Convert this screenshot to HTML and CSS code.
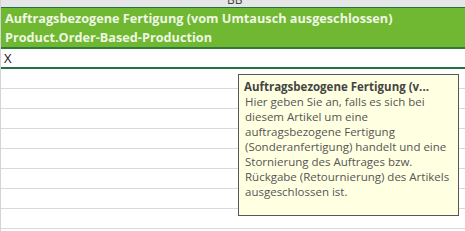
FILE: index.html
```html
<!DOCTYPE html>
<html lang="de">
<head>
    <meta charset="UTF-8">
    <title>Auftragsbezogene Fertigung</title>
    <link rel="stylesheet" href="styles.css">
</head>
<body>
<div class="sheet">
    <div class="col-header"><span class="col-name">BB</span></div>
    <div class="head-cell">
        <div class="head-line">Auftragsbezogene Fertigung (vom Umtausch ausgeschlossen)</div>
        <div class="head-line">Product.Order-Based-Production</div>
    </div>
    <div class="cell active">X</div>
    <div class="row"></div>
    <div class="row"></div>
    <div class="row"></div>
    <div class="row"></div>
    <div class="row"></div>
    <div class="row"></div>
    <div class="row"></div>
    <div class="row"></div>

    <div class="tooltip">
        <div class="tip-title">Auftragsbezogene Fertigung (v...</div>
        <div class="tip-text">Hier geben Sie an, falls es sich bei diesem Artikel um eine auftragsbezogene Fertigung (Sonderanfertigung) handelt und eine Stornierung des Auftrages bzw. Rückgabe (Retournierung) des Artikels ausgeschlossen ist.</div>
    </div>
</div>
</body>
</html>
```

FILE: styles.css
```css
body {
    margin: 0;
    background: #fff;
    font-family: 'Open Sans', sans-serif;
    overflow: hidden;
}
.sheet {
    position: relative;
    width: 465px;
    height: 231px;
    overflow: hidden;
    border-left: 1px solid #d4d4d4;
    box-sizing: border-box;
}
.col-header {
    height: 7px;
    background: #e6e6e6;
    border-bottom: 1px solid #217346;
    overflow: hidden;
    position: relative;
}
.col-name {
    position: absolute;
    left: 226px;
    top: -9px;
    font-size: 12px;
    color: #444;
}
.head-cell {
    background: #70b832;
    color: #eef7e3;
    font-weight: 700;
    font-size: 12.7px;
    padding: 1px 0 0 4px;
    height: 38px;
    border-bottom: 2px solid #2f7a3d;
}
.head-line {
    height: 19px;
    line-height: 19px;
    white-space: nowrap;
}
.cell {
    height: 18px;
    line-height: 18px;
    padding-left: 3px;
    font-size: 13px;
    color: #111;
}
.cell.active {
    border-bottom: 2px solid #217346;
}
.row {
    height: 19px;
    border-bottom: 1px solid #d9d9d9;
}

/* Kommentar-Tooltip */
.tooltip {
    position: absolute;
    left: 237px;
    top: 74px;
    width: 211px;
    height: 133px;
    background: #ffffe1;
    border: 1px solid #575757;
    padding: 4px 3px 3px 5px;
    font-size: 11.5px;
    line-height: 15px;
    color: #555;
}
.tip-title {
    font-weight: 700;
    color: #444;
}
.tip-text {
    padding-left: 1px;
}
```
